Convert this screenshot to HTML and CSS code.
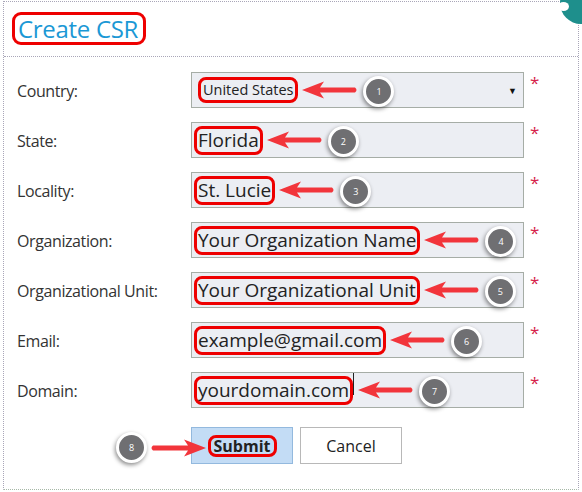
FILE: index.html
```html
<!DOCTYPE html>
<html lang="en">
<head>
  <meta charset="UTF-8">
  <title>Create CSR</title>
  <link rel="stylesheet" href="styles.css">
</head>
<body>
<div class="dialog">
  <span class="close-dot"></span>
  <div class="dialog-header">
    <h1 class="title">Create CSR</h1>
  </div>

  <form class="csr-form">
    <label class="label">Country:</label>
    <div class="field select">
      <span class="hl hl-small">United States</span>
      <svg class="arrow" viewBox="0 0 56 18"><path d="M0 9 L22 0.5 L18 6.5 L53 6.5 Q56 9 53 11.5 L18 11.5 L22 17.5 Z"/></svg>
      <span class="badge">1</span>
      <span class="caret">&#9660;</span>
    </div>
    <span class="req">*</span>

    <label class="label">State:</label>
    <div class="field">
      <span class="hl">Florida</span>
      <svg class="arrow" viewBox="0 0 56 18"><path d="M0 9 L22 0.5 L18 6.5 L53 6.5 Q56 9 53 11.5 L18 11.5 L22 17.5 Z"/></svg>
      <span class="badge">2</span>
    </div>
    <span class="req">*</span>

    <label class="label">Locality:</label>
    <div class="field">
      <span class="hl">St. Lucie</span>
      <svg class="arrow" viewBox="0 0 56 18"><path d="M0 9 L22 0.5 L18 6.5 L53 6.5 Q56 9 53 11.5 L18 11.5 L22 17.5 Z"/></svg>
      <span class="badge">3</span>
    </div>
    <span class="req">*</span>

    <label class="label">Organization:</label>
    <div class="field">
      <span class="hl">Your Organization Name</span>
      <svg class="arrow" viewBox="0 0 56 18"><path d="M0 9 L22 0.5 L18 6.5 L53 6.5 Q56 9 53 11.5 L18 11.5 L22 17.5 Z"/></svg>
      <span class="badge">4</span>
    </div>
    <span class="req">*</span>

    <label class="label">Organizational Unit:</label>
    <div class="field">
      <span class="hl">Your Organizational Unit</span>
      <svg class="arrow" viewBox="0 0 56 18"><path d="M0 9 L22 0.5 L18 6.5 L53 6.5 Q56 9 53 11.5 L18 11.5 L22 17.5 Z"/></svg>
      <span class="badge">5</span>
    </div>
    <span class="req">*</span>

    <label class="label">Email:</label>
    <div class="field">
      <span class="hl">example@gmail.com</span>
      <svg class="arrow" viewBox="0 0 56 18"><path d="M0 9 L22 0.5 L18 6.5 L53 6.5 Q56 9 53 11.5 L18 11.5 L22 17.5 Z"/></svg>
      <span class="badge">6</span>
    </div>
    <span class="req">*</span>

    <label class="label">Domain:</label>
    <div class="field">
      <span class="hl">yourdomain.com</span><span class="cursor"></span>
      <svg class="arrow" viewBox="0 0 56 18"><path d="M0 9 L22 0.5 L18 6.5 L53 6.5 Q56 9 53 11.5 L18 11.5 L22 17.5 Z"/></svg>
      <span class="badge">7</span>
    </div>
    <span class="req">*</span>

    <div class="actions">
      <div class="pointer">
        <span class="badge">8</span>
        <svg class="arrow right" viewBox="0 0 56 18"><path d="M0 9 L22 0.5 L18 6.5 L53 6.5 Q56 9 53 11.5 L18 11.5 L22 17.5 Z"/></svg>
      </div>
      <button type="button" class="btn btn-primary"><span class="hl hl-btn">Submit</span></button>
      <button type="button" class="btn">Cancel</button>
    </div>
  </form>
</div>
</body>
</html>
```

FILE: styles.css
```css
body {
  margin: 0;
  padding: 1px 0 0 3px;
  background-color: #fff;
  font-family: "Open Sans", "Noto Sans", sans-serif;
  color: #2b2b2b;
}
.dialog {
  position: relative;
  width: 576px;
  height: 489px;
  box-sizing: border-box;
  border: 1px dotted #a9a6b8;
  border-bottom-color: #a7b8a7;
}
.close-dot {
  position: absolute;
  top: -20px;
  right: -24px;
  width: 42px;
  height: 42px;
  border-radius: 50%;
  background-color: #1e8f8c;
}
.close-dot::after {
  content: "";
  position: absolute;
  left: -2px;
  top: 20px;
  width: 11px;
  height: 9px;
  border-radius: 50%;
  background-color: #fff;
}
.dialog-header {
  height: 55px;
  box-sizing: border-box;
  padding: 10px 0 0 8px;
  border-bottom: 1px dotted #a9a6b8;
}
.title {
  display: inline-block;
  margin: 0;
  padding: 0 5px 0 3px;
  border: 3px solid #ee0000;
  border-radius: 9px;
  font-size: 24px;
  font-weight: normal;
  line-height: 27px;
  letter-spacing: -0.3px;
  color: #1b98d5;
}
.csr-form {
  display: grid;
  grid-template-columns: 168px 333px 20px;
  grid-auto-rows: 36px;
  row-gap: 14px;
  column-gap: 6px;
  padding: 15px 0 0 13px;
}
.label {
  align-self: center;
  font-size: 16px;
  letter-spacing: -0.4px;
  color: #333;
  white-space: nowrap;
  padding-top: 1px;
}
.field {
  position: relative;
  display: flex;
  align-items: center;
  box-sizing: border-box;
  border: 1px solid #a6ada6;
  background-color: #eceef3;
  padding-left: 2px;
  font-size: 19px;
  color: #222;
}
.hl {
  border: 3px solid #ee0000;
  border-radius: 8px;
  padding: 0 1px;
  line-height: 23px;
  white-space: nowrap;
}
.hl-small {
  margin-left: 4px;
  padding: 0 2px;
  font-size: 14.5px;
  line-height: 20px;
}
.arrow {
  flex: none;
  width: 56px;
  height: 18px;
  margin-left: 4px;
  fill: #f2353b;
}
.badge {
  flex: none;
  display: inline-flex;
  align-items: center;
  justify-content: center;
  width: 25px;
  height: 25px;
  margin-left: 5px;
  margin-top: 3px;
  border: 3px solid #fff;
  border-radius: 50%;
  background-color: #6f6f72;
  box-shadow: -1px 2px 4px rgba(0, 0, 0, 0.45);
  font-size: 9px;
  color: #fff;
}
.caret {
  margin-left: auto;
  margin-right: 6px;
  font-size: 9px;
  color: #111;
}
.cursor {
  align-self: flex-start;
  width: 1px;
  height: 22px;
  background-color: #222;
}
.req {
  font-size: 17px;
  line-height: 1;
  color: #d61f4c;
  padding-top: 2px;
}
.actions {
  position: relative;
  grid-column: 2;
  display: flex;
  gap: 7px;
  margin-top: 5px;
  height: 36px;
}
.pointer {
  position: absolute;
  left: -75px;
  top: 5px;
  display: flex;
  align-items: center;
  z-index: 1;
}
.pointer .badge {
  margin: 0;
}
.arrow.right {
  transform: scaleX(-1);
  margin-left: 3px;
}
.btn {
  width: 102px;
  height: 37px;
  box-sizing: border-box;
  border: 1px solid #b8b8b8;
  background-color: #fff;
  font-family: "Open Sans", "Noto Sans", sans-serif;
  font-size: 16px;
  color: #222;
  padding: 0;
}
.btn-primary {
  background-color: #c3dcf5;
  border-color: #93b9de;
  font-weight: bold;
}
.hl-btn {
  display: inline-block;
  padding: 0 3px;
  line-height: 16px;
  border-radius: 8px;
}
```
